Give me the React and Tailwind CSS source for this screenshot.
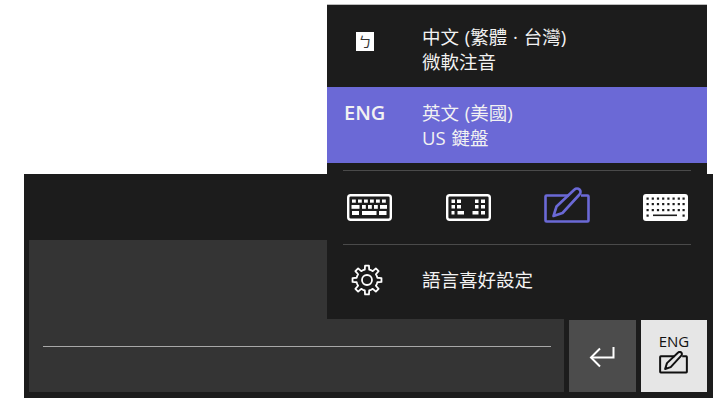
import React from 'react';

const sans = '"Open Sans","Noto Sans CJK TC",sans-serif';

const Keyboard = () => (
  <svg width="45" height="27" viewBox="0 0 45 27">
    <rect x="1.2" y="1.2" width="42.6" height="24.6" rx="2.5" fill="none" stroke="#fff" strokeWidth="2.4" />
    <g fill="#fff">
      {[5, 11, 17, 23, 29, 35].map((x) => <rect key={x} x={x} y="5.5" width="3.8" height="3.2" />)}
      <rect x="4.5" y="11" width="8" height="3.8" />
      <rect x="15" y="11" width="3.8" height="3.8" />
      <rect x="21" y="11" width="3.8" height="3.8" />
      <rect x="27" y="11" width="3.8" height="3.8" />
      <rect x="33" y="11" width="7" height="3.8" />
      <rect x="5" y="17" width="7" height="4" />
      <rect x="15" y="17" width="14.5" height="4" />
      <rect x="32" y="17" width="7.5" height="4" />
    </g>
  </svg>
);

const SplitKeyboard = () => (
  <svg width="45" height="27" viewBox="0 0 45 27">
    <rect x="1.2" y="1.2" width="42.6" height="24.6" rx="2.5" fill="none" stroke="#fff" strokeWidth="2.4" />
    <g fill="#fff">
      {[5.5, 11].map((y) => (
        <g key={y}>
          <rect x="5.5" y={y} width="3.5" height="3.5" />
          <rect x="11" y={y} width="4" height="3.5" />
          <rect x="29" y={y} width="3.5" height="3.5" />
          <rect x="35" y={y} width="4" height="3.5" />
        </g>
      ))}
      <rect x="5.5" y="17" width="3" height="3.5" />
      <rect x="11.5" y="17" width="6.5" height="3.5" />
      <rect x="26.5" y="17" width="6" height="3.5" />
      <rect x="35" y="17" width="4" height="3.5" />
    </g>
  </svg>
);

const PenPad = ({ color, size = 'w-[46px] h-[37px]', width = 2.6 }) => (
  <svg className={size} viewBox="0 0 46 37" fill="none" stroke={color} strokeWidth={width} strokeLinejoin="round">
    <path d="M25 8.5H2.5a1 1 0 0 0-1 1v24a1 1 0 0 0 1 1h41a1 1 0 0 0 1-1v-24a1 1 0 0 0-1-1H37" />
    <path d="M9.5 29l3-9.5L30.5 2.5a3.5 3.5 0 0 1 5 0a3.5 3.5 0 0 1 0 5L18.5 26z" />
  </svg>
);

const DotKeyboard = () => (
  <svg width="45" height="27" viewBox="0 0 45 27">
    <rect width="45" height="27" rx="3" fill="#fff" />
    <g fill="#1c1c1c">
      {[3.5, 9, 15].map((y) =>
        [3.5, 8.7, 13.9, 19.1, 24.3, 29.5, 34.7, 39.5].map((x) => <rect key={x + '-' + y} x={x} y={y} width="2.2" height="2.2" />)
      )}
      <rect x="3.5" y="20.5" width="2.2" height="2.2" />
      <rect x="10" y="20.5" width="24" height="1.6" />
      <rect x="39.5" y="20.5" width="2.2" height="2.2" />
    </g>
  </svg>
);

const gearPath = (() => {
  const pts = [];
  for (let i = 0; i < 8; i++) {
    const a = (i * Math.PI) / 4 - Math.PI / 2;
    const step = Math.PI / 4;
    [[-0.5, 10.6], [-0.27, 10.6], [-0.17, 14.6], [0.17, 14.6], [0.27, 10.6], [0.5, 10.6]].forEach(([t, r]) => {
      const p = a + t * step;
      pts.push((16 + r * Math.cos(p)).toFixed(2) + ' ' + (16 + r * Math.sin(p)).toFixed(2));
    });
  }
  return 'M' + pts.join('L') + 'Z';
})();

const Gear = () => (
  <svg width="32" height="32" viewBox="0 0 32 32" fill="none" stroke="#fff" strokeWidth="1.8" strokeLinejoin="round">
    <path d={gearPath} />
    <circle cx="16" cy="16" r="5" />
  </svg>
);

const ReturnArrow = () => (
  <svg width="26" height="22" viewBox="0 0 26 22" fill="none" stroke="#fff" strokeWidth="2">
    <path d="M24.5 1v10.5H2" />
    <path d="M11 2.5l-9 9 9 9" />
  </svg>
);

const Divider = () => <div className="mx-4 h-px bg-[#4a4a4a]" />;

const LanguageMenu = () => (
  <div className="absolute left-[327px] top-[5px] w-[380px] h-[314px] bg-[#1c1c1c] text-[#f2f2f2] text-[18.5px] leading-[25px] shadow-[0_-1px_0_#bdbdbd] [word-spacing:1px]">
    <div className="flex h-[82px] items-center">
      <div className="w-[95px] pl-[29px]">
        <div className="w-[18px] h-[19px] bg-white text-[#333] text-[14px] leading-[19px] text-center mb-[9px]">ㄅ</div>
      </div>
      <div className="mt-[5px]">
        <div>中文 (繁體 · 台灣)</div>
        <div>微軟注音</div>
      </div>
    </div>
    <div className="flex h-[76px] items-center bg-[#6b69d6]">
      <div className="w-[95px] pl-[17px] mb-[25px] text-[20px] font-semibold leading-[26px]">ENG</div>
      <div>
        <div>英文 (美國)</div>
        <div>US 鍵盤</div>
      </div>
    </div>
    <div className="mt-[7px]"><Divider /></div>
    <div className="flex h-[73px] items-center gap-[54px] pl-[20px]">
      <Keyboard />
      <SplitKeyboard />
      <div className="mb-[4px] ml-[-1px] mr-[-1px]"><PenPad color="#6b69d6" /></div>
      <DotKeyboard />
    </div>
    <Divider />
    <div className="flex h-[69px] items-center">
      <div className="w-[95px] pl-[24px]"><Gear /></div>
      <div>語言喜好設定</div>
    </div>
  </div>
);

export default function App() {
  return (
    <div className="relative w-[720px] h-[400px] overflow-hidden bg-white pt-[174px] pl-[24px]" style={{ fontFamily: sans }}>
      <div className="w-[689px] h-[224px] bg-[#1c1c1c] pt-[66px] pl-[5px]">
        <div className="flex gap-[5px] h-[152px] items-end">
          <div className="w-[535px] h-[152px] bg-[#343434] pl-[14px] pr-[13px] pt-[106px]">
            <div className="h-px bg-[#a8a8a8]" />
          </div>
          <div className="w-[67px] h-[72px] bg-[#4c4c4c] flex items-center justify-center pt-[2px] pr-[2px]">
            <ReturnArrow />
          </div>
          <div className="w-[66px] h-[72px] bg-[#e6e6e6] flex flex-col items-center pt-[13px] text-[#111] text-[15px] leading-[16px]">
            <div>ENG</div>
            <div className="mt-[2px] mr-[2px]"><PenPad color="#111" size="w-[29px] h-[23px]" width="3.2" /></div>
          </div>
        </div>
      </div>
      <LanguageMenu />
    </div>
  );
}
